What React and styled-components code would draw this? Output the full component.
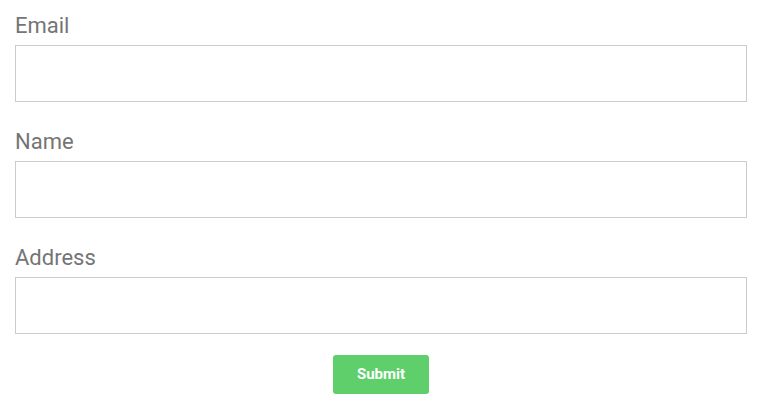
import styled, { createGlobalStyle } from "styled-components";

const GlobalStyle = createGlobalStyle`
  body {
    margin: 0;
    background: #fff;
    font-family: Roboto, "Liberation Sans", sans-serif;
  }
`;

const Form = styled.form`
  display: flex;
  flex-direction: column;
  padding: 14px 17px 0 15px;
`;

const Field = styled.div`
  display: flex;
  flex-direction: column;
  gap: 7px;
  margin-bottom: 28px;

  &:last-of-type {
    margin-bottom: 21px;
  }
`;

const Label = styled.label`
  font-size: 22px;
  line-height: 24px;
  color: #757575;
`;

const Input = styled.input`
  box-sizing: border-box;
  width: 100%;
  height: 57px;
  border: 1px solid #cccccc;
  border-radius: 0;
  padding: 0 12px;
  font-size: 16px;
  font-family: inherit;
  outline: none;
`;

const SubmitButton = styled.button`
  align-self: center;
  width: 96px;
  height: 39px;
  border: none;
  border-radius: 3px;
  background: #5fcf6c;
  color: #fff;
  font-family: Roboto, "Liberation Sans", sans-serif;
  font-size: 15px;
  font-weight: 700;
  padding: 0 0 2px;
  cursor: pointer;
`;

const fields = ["Email", "Name", "Address"];

const App = () => {
  return (
    <>
      <GlobalStyle />
      <Form onSubmit={(e) => e.preventDefault()}>
        {fields.map((name) => (
          <Field key={name}>
            <Label htmlFor={name.toLowerCase()}>{name}</Label>
            <Input id={name.toLowerCase()} type="text" />
          </Field>
        ))}
        <SubmitButton type="submit">Submit</SubmitButton>
      </Form>
    </>
  );
};

export default App;
